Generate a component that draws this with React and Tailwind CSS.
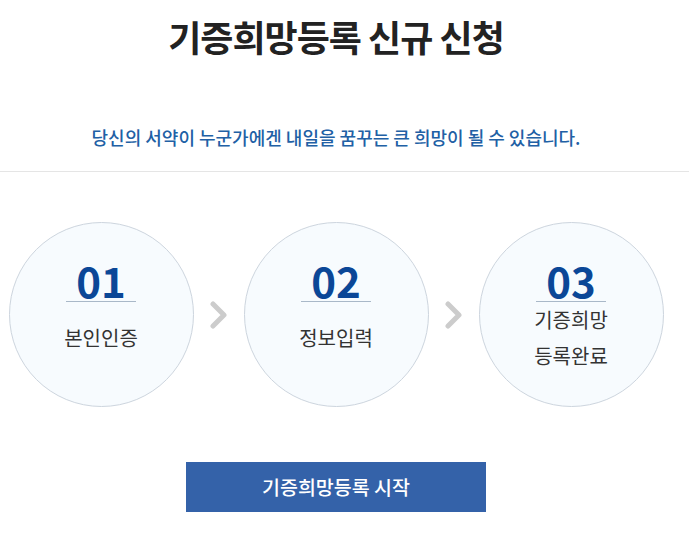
import React from "react";

const FONT = { fontFamily: '"Noto Sans CJK KR", "Noto Sans", sans-serif' };

const STEPS = [
  { no: "01", lines: ["본인인증"] },
  { no: "02", lines: ["정보입력"] },
  { no: "03", lines: ["기증희망", "등록완료"] },
];

function Chevron() {
  return (
    <svg width="20" height="28" viewBox="0 0 20 28" className="shrink-0">
      <path
        d="M4 3 L15 14 L4 25"
        fill="none"
        stroke="#cccccc"
        strokeWidth="5"
        strokeLinecap="round"
        strokeLinejoin="round"
      />
    </svg>
  );
}

function StepCircle({ step }) {
  return (
    <div className="w-[185px] h-[185px] rounded-full border border-[#cdd5de] bg-[#f7fbfe] flex flex-col items-center pt-[36px] shrink-0">
      <div className="text-[42px] font-bold leading-[42px] text-[#0b4797]">
        {step.no}
      </div>
      <div className="w-[70px] h-px bg-[#a9b8c8]" />
      <div className="h-[72px] flex flex-col justify-center items-center text-[20px] leading-[36px] text-[#333333]">
        {step.lines.map((l) => (
          <span key={l}>{l}</span>
        ))}
      </div>
    </div>
  );
}

export default function App() {
  return (
    <div className="w-[689px] h-[545px] bg-white overflow-hidden" style={FONT}>
      <div className="w-[672px] flex flex-col items-center">
        <h1 className="mt-[12px] text-[36px] font-bold leading-[48px] tracking-[-1px] text-[#222222]">
          기증희망등록 신규 신청
        </h1>
        <p className="mt-[64px] text-[18px] font-medium leading-[26px] text-[#2160a5]">
          당신의 서약이 누군가에겐 내일을 꿈꾸는 큰 희망이 될 수 있습니다.
        </p>
      </div>
      <div className="mt-[21px] border-t border-[#e5e5e5]" />
      <div className="w-[672px] flex flex-col items-center">
        <div className="mt-[50px] flex items-center gap-[15px]">
          {STEPS.map((s, i) => (
            <React.Fragment key={s.no}>
              {i > 0 && <Chevron />}
              <StepCircle step={s} />
            </React.Fragment>
          ))}
        </div>
        <button
          type="button"
          className="mt-[55px] w-[300px] h-[50px] bg-[#3462a9] text-white text-[19.5px] font-medium"
        >
          기증희망등록 시작
        </button>
      </div>
    </div>
  );
}
